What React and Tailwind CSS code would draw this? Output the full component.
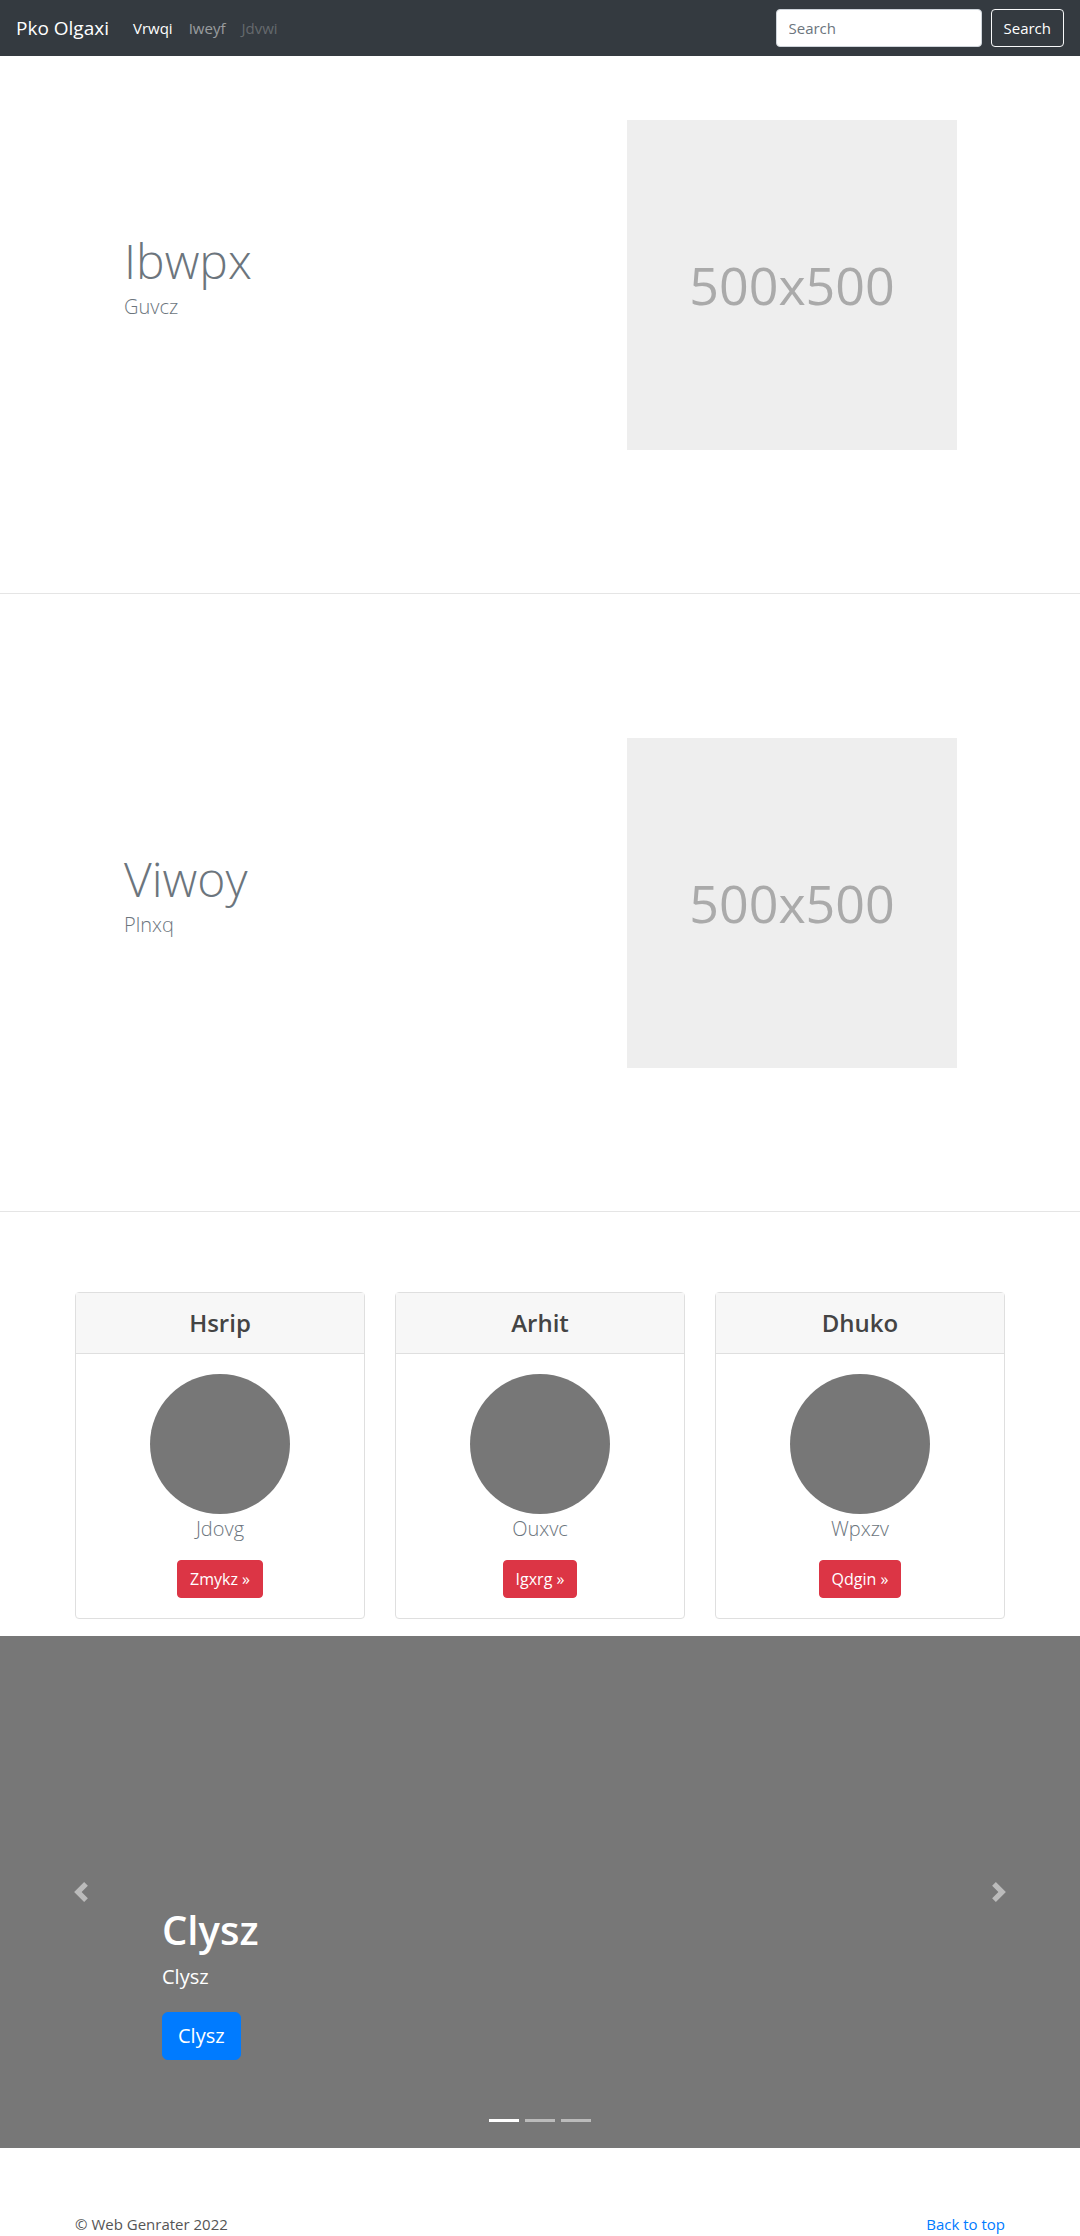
import React from 'react';

const FEATURES = [
  { title: 'Ibwpx', sub: 'Guvcz', top: 'pt-16' },
  { title: 'Viwoy', sub: 'Plnxq', top: 'pt-36' },
];

const CARDS = [
  { head: 'Hsrip', name: 'Jdovg', cta: 'Zmykz' },
  { head: 'Arhit', name: 'Ouxvc', cta: 'Igxrg' },
  { head: 'Dhuko', name: 'Wpxzv', cta: 'Qdgin' },
];

function Feature({ title, sub, top }) {
  return (
    <section className={`${top} pb-[143px] border-b border-[#e5e5e5]`}>
      <div className="w-[960px] mx-auto grid grid-cols-2 items-center">
        <div className="pl-16">
          <h1 className="text-[48px] font-light leading-[1.2] text-[#6c757d] mb-0.5">{title}</h1>
          <p className="text-xl font-light leading-[30px] text-[#6c757d] mb-4">{sub}</p>
        </div>
        <div className="pl-[87px]">
          <div className="w-[330px] h-[330px] bg-[#eeeeee] flex items-center justify-center">
            <span className="text-[52px] text-[#aaaaaa]">500x500</span>
          </div>
        </div>
      </div>
    </section>
  );
}

function Card({ head, name, cta }) {
  return (
    <div className="border border-[#dfdfdf] rounded">
      <div className="bg-[#f7f7f7] border-b border-[#dfdfdf] py-3 text-center">
        <h4 className="text-2xl leading-9 font-semibold text-[#444]">{head}</h4>
      </div>
      <div className="p-5 flex flex-col items-center">
        <div className="w-[140px] h-[140px] rounded-full bg-[#777777]" />
        <p className="text-xl font-light leading-[30px] text-[#6c757d] mb-4">{name}</p>
        <button className="bg-[#dc3545] text-white text-base leading-6 px-3 py-1.5 rounded border border-[#dc3545]">
          {cta} »
        </button>
      </div>
    </div>
  );
}

function Chevron({ dir }) {
  const d = dir === 'left'
    ? 'M5.25 0l-4 4 4 4 1.5-1.5L4.25 4l2.5-2.5L5.25 0z'
    : 'M2.75 0l-1.5 1.5L3.75 4l-2.5 2.5L2.75 8l4-4-4-4z';
  return (
    <svg width="20" height="20" viewBox="0 0 8 8" fill="#fff" fillOpacity="0.5">
      <path d={d} />
    </svg>
  );
}

export default function App() {
  return (
    <div className="min-h-screen bg-white font-['Open_Sans',sans-serif] text-[#212529]">
      {/* Navbar */}
      <nav className="h-14 bg-[#343a40] flex items-center px-4">
        <a className="text-[19px] text-white mr-4">Pko Olgaxi</a>
        <div className="flex text-[15px]">
          <a className="px-2 text-white">Vrwqi</a>
          <a className="px-2 text-white/50">Iweyf</a>
          <a className="px-2 text-white/25">Jdvwi</a>
        </div>
        <div className="ml-auto flex items-center">
          <input
            placeholder="Search"
            className="w-[206px] h-[38px] bg-white rounded px-3 text-[15px] text-[#495057] placeholder:text-[#6c757d] mr-[9px] border border-[#ced4da] outline-none"
          />
          <button className="h-[38px] px-3 border border-[#f8f9fa] rounded text-white text-[15px]">
            Search
          </button>
        </div>
      </nav>

      {FEATURES.map(f => <Feature key={f.title} {...f} />)}

      {/* Cards */}
      <section className="pt-20 pb-[17px]">
        <div className="w-[930px] mx-auto grid grid-cols-3 gap-[30px]">
          {CARDS.map(c => <Card key={c.head} {...c} />)}
        </div>
      </section>

      {/* Carousel */}
      <div className="relative h-[512px] bg-[#777777]">
        <div className="h-full flex flex-col justify-end pl-[162px] pb-[88px]">
          <h1 className="text-[40px] leading-[48px] font-semibold text-white mb-2">Clysz</h1>
          <p className="text-xl leading-[30px] text-white mb-5">Clysz</p>
          <div>
            <button className="bg-[#007bff] text-white text-xl leading-[30px] px-[15px] py-2 rounded-md border border-[#007bff]">
              Clysz
            </button>
          </div>
        </div>
        <div className="absolute left-0 top-0 h-full w-[162px] flex items-center justify-center">
          <Chevron dir="left" />
        </div>
        <div className="absolute right-0 top-0 h-full w-[162px] flex items-center justify-center">
          <Chevron dir="right" />
        </div>
        <div className="absolute bottom-[26px] left-0 right-0 flex justify-center gap-1.5">
          <span className="w-[30px] h-[3px] bg-white" />
          <span className="w-[30px] h-[3px] bg-white/50" />
          <span className="w-[30px] h-[3px] bg-white/50" />
        </div>
      </div>

      {/* Footer */}
      <footer className="pt-16 pb-12">
        <div className="w-[930px] mx-auto flex justify-between text-[15px] leading-6">
          <p className="text-[#555]">© Web Genrater 2022</p>
          <a className="text-[#007bff]">Back to top</a>
        </div>
      </footer>
    </div>
  );
}
